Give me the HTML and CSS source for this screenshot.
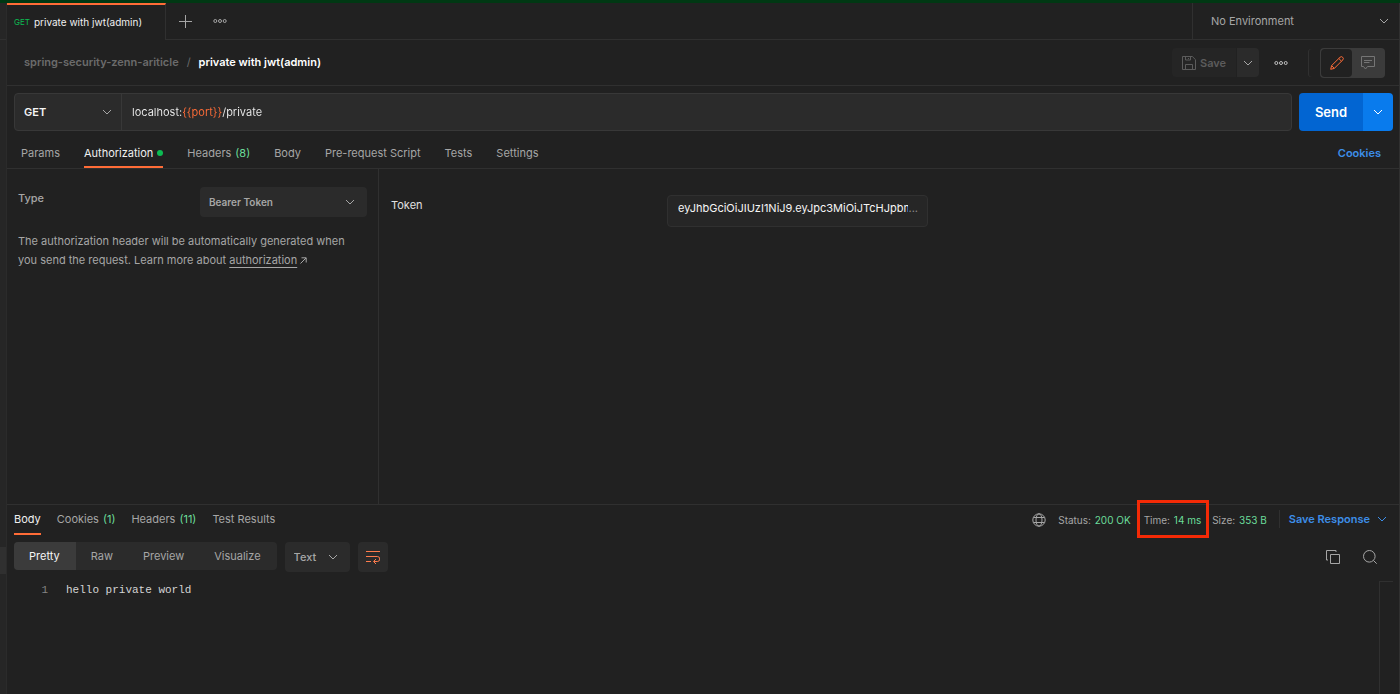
FILE: index.html
```html
<!DOCTYPE html>
<html lang="en">
<head>
<meta charset="utf-8">
<title>private with jwt(admin)</title>
<link rel="stylesheet" href="styles.css">
</head>
<body>
<svg class="sprite" aria-hidden="true">
  <symbol id="chevron" viewBox="0 0 10 10"><path d="M1 3l4 4 4-4" fill="none" stroke="currentColor"/></symbol>
  <symbol id="dots" viewBox="0 0 14 6"><g fill="none" stroke="currentColor"><circle cx="2.300" cy="3" r="1.500"/><circle cx="7" cy="3" r="1.500"/><circle cx="11.700" cy="3" r="1.500"/></g></symbol>
</svg>
<div class="app">
  <aside class="rail"><div class="rail-head"></div><div class="rail-item"></div></aside>
  <main class="main">
    <header class="tabbar">
      <button class="file-tab"><span class="verb">GET</span>private with jwt(admin)</button>
      <button class="icon-btn add-tab" aria-label="New tab"><svg width="13" height="13" viewBox="0 0 13 13"><path d="M6.500 0v13M0 6.500h13" stroke="currentColor" fill="none"/></svg></button>
      <button class="icon-btn more-tabs" aria-label="Tab options"><svg width="14" height="6"><use href="#dots"/></svg></button>
      <div class="select-box env">
        <select aria-label="Environment"><option>No Environment</option></select>
        <svg class="chev" width="10" height="10"><use href="#chevron"/></svg>
      </div>
    </header>

    <div class="titlebar">
      <nav class="crumbs"><a href="#">spring-security-zenn-ariticle</a><span>/</span><strong>private with jwt(admin)</strong></nav>
      <div class="save-group">
        <button class="save" disabled><svg width="14" height="14" viewBox="0 0 14 14"><g fill="none" stroke="currentColor"><path d="M.5.5h9.800l3.200 3.200v9.800H.5z"/><path d="M3.500.5v3.500h5V.5M3.500 13.500V8.500h7v5M6.500 2v1"/></g></svg>Save</button>
        <button class="save-more" aria-label="Save options"><svg width="10" height="10"><use href="#chevron"/></svg></button>
      </div>
      <button class="icon-btn more" aria-label="More actions"><svg width="14" height="6"><use href="#dots"/></svg></button>
      <div class="view-toggle">
        <button class="on" aria-label="Edit"><svg width="14" height="14" viewBox="0 0 14 14"><g fill="none" stroke="currentColor"><path d="M.7 13.300l.9-3.700 8.400-8.300a1.900 1.900 0 0 1 2.700 2.700L4.300 12.400z"/><path d="M8.800 2.500l2.700 2.700M1.600 9.600l2.700 2.800"/></g></svg></button>
        <button aria-label="Comments"><svg width="14" height="14" viewBox="0 0 14 14"><g fill="none" stroke="currentColor"><path d="M.5.5h13v10H6.500L4.500 13l-2-2.500h-2z"/><path d="M3 4.500h8M3 6.500h5.500"/></g></svg></button>
      </div>
    </div>

    <form class="request">
      <div class="url-box">
        <div class="select-box method">
          <select aria-label="Method"><option>GET</option></select>
          <svg class="chev" width="10" height="10"><use href="#chevron"/></svg>
        </div>
        <input class="url" type="text" aria-label="Request URL" value="localhost:{{port}}/private">
      </div>
      <div class="send-group">
        <button class="send" type="button">Send</button>
        <button class="send-more" type="button" aria-label="Send options"><svg width="10" height="10"><use href="#chevron"/></svg></button>
      </div>
    </form>

    <nav class="req-tabs">
      <button>Params</button>
      <button class="active">Authorization<i class="dot"></i></button>
      <button>Headers <span class="count">(8)</span></button>
      <button>Body</button>
      <button>Pre-request Script</button>
      <button>Tests</button>
      <button>Settings</button>
      <a class="cookies" href="#">Cookies</a>
    </nav>

    <section class="auth">
      <div class="auth-type">
        <div class="type-row">
          <label for="type">Type</label>
          <div class="select-box type-select">
            <select id="type"><option>Bearer Token</option></select>
            <svg class="chev" width="10" height="10"><use href="#chevron"/></svg>
          </div>
        </div>
        <p>The authorization header will be automatically generated when you send the request. Learn more about <a href="#">authorization</a> <svg width="7" height="7" viewBox="0 0 7 7"><path d="M.5 6.500l5.500-5.500M1.500.8h4.700v4.700" fill="none" stroke="currentColor"/></svg></p>
      </div>
      <div class="auth-form">
        <label for="token">Token</label>
        <div class="token-box"><input id="token" type="text" value="eyJhbGciOiJIUzI1NiJ9.eyJpc3MiOiJTcHJpbmc"><span>...</span></div>
      </div>
    </section>

    <section class="response">
      <div class="res-head">
        <nav class="res-tabs">
          <button class="active">Body</button>
          <button>Cookies <span class="count">(1)</span></button>
          <button>Headers <span class="count">(11)</span></button>
          <button>Test Results</button>
        </nav>
        <div class="meta">
          <svg class="globe" width="14" height="14" viewBox="0 0 14 14"><g fill="none" stroke="currentColor"><circle cx="7" cy="7" r="6.200"/><ellipse cx="7" cy="7" rx="3" ry="6.200"/><path d="M1.500 4.500h11M1.500 9.500h11"/></g></svg>
          <span>Status: <b>200 OK</b></span>
          <span class="time">Time: <b>14 ms</b></span>
          <span>Size: <b>353 B</b></span>
          <button class="save-res">Save Response<svg width="10" height="10"><use href="#chevron"/></svg></button>
        </div>
      </div>
      <div class="res-tools">
        <div class="views"><button class="on">Pretty</button><button>Raw</button><button>Preview</button><button>Visualize</button></div>
        <div class="select-box format">
          <select aria-label="Format"><option>Text</option></select>
          <svg class="chev" width="10" height="10"><use href="#chevron"/></svg>
        </div>
        <button class="wrap" aria-label="Wrap lines"><svg width="14" height="14" viewBox="0 0 14 14"><g fill="none" stroke="currentColor"><path d="M0 1.500h14M0 6.500h11.300a2.300 2.300 0 0 1 0 5H8M0 11.500h5"/><path d="M10 9L7.500 11.500 10 14"/></g></svg></button>
        <div class="tools-right">
          <button class="icon-btn" aria-label="Copy"><svg width="14" height="14" viewBox="0 0 14 14"><g fill="none" stroke="currentColor"><path d="M4.500 4.500h9v9h-9z"/><path d="M2 10H.5V.5H10V2"/></g></svg></button>
          <button class="icon-btn" aria-label="Search"><svg width="14" height="14" viewBox="0 0 14 14"><g fill="none" stroke="currentColor"><circle cx="6.300" cy="6.300" r="5.800"/><path d="M10.400 10.400l3.300 3.300"/></g></svg></button>
        </div>
      </div>
      <div class="code">
        <pre><span class="num">1</span>hello private world</pre>
        <div class="minimap"></div>
      </div>
    </section>
  </main>
</div>
</body>
</html>
```
FILE: styles.css
```css
* { box-sizing: border-box; }
body {
  margin: 0;
  background: #212121;
  color: #a6a6a6;
  font: 11px/18px Inter, "Liberation Sans", sans-serif;
}
button, select, input {
  margin: 0;
  padding: 0;
  border: 0;
  background: none;
  color: inherit;
  font: inherit;
}
svg { display: block; flex: none; }
a { color: inherit; text-decoration: none; }
.sprite { position: absolute; width: 0; height: 0; }

.app {
  display: flex;
  height: 100vh;
  border-top: 3px solid #003813;
}
.rail {
  width: 7px;
  flex: none;
  background: #262626;
  border-right: 1px solid #2b2b2b;
}
.rail-head { height: 37px; border-bottom: 1px solid #303030; }
.rail-item { height: 27px; margin-top: 507px; background: #303030; }
.main {
  flex: 1;
  min-width: 0;
  display: flex;
  flex-direction: column;
  border-right: 1px solid #303030;
}

.select-box { display: grid; align-items: center; }
.select-box select, .select-box .chev { grid-area: 1 / 1; }
.select-box select { appearance: none; width: 100%; height: 100%; outline: none; }
.select-box .chev { justify-self: end; pointer-events: none; }
.icon-btn { display: grid; place-items: center; }

.tabbar {
  display: flex;
  height: 37px;
  flex: none;
  border-bottom: 1px solid #303030;
}
.file-tab {
  display: flex;
  align-items: center;
  gap: 4px;
  width: 159px;
  height: 37px;
  padding: 0 0 2px 7px;
  background: #212121;
  border-top: 2px solid #ff6c37;
  border-right: 1px solid #303030;
  color: #f0f0f0;
  font-size: 10px;
  white-space: nowrap;
}
.verb { color: #0cbb52; font-size: 8px; }
.add-tab { width: 39px; }
.more-tabs { width: 29px; }
.env {
  width: 207px;
  margin-left: auto;
  padding-right: 10px;
  border-left: 1px solid #303030;
}
.env select { padding-left: 18px; }

.titlebar {
  display: flex;
  align-items: center;
  height: 46px;
  flex: none;
  padding: 0 14px 0 17px;
  border-bottom: 1px solid #303030;
}
.crumbs { display: flex; gap: 8px; margin-right: auto; padding-bottom: 2px; font-weight: 600; color: #6b6b6b; }
.crumbs span { font-weight: 400; }
.crumbs strong { color: #fff; font-weight: 600; }
.save-group { display: flex; gap: 1px; height: 29px; }
.save {
  display: flex;
  align-items: center;
  gap: 4px;
  width: 64px;
  padding-left: 10px;
  border-radius: 4px 0 0 4px;
  background: #252525;
  color: #5c5c5c;
  font-size: 11px;
  font-weight: 600;
}
.save-more {
  display: grid;
  place-items: center;
  width: 22px;
  border-radius: 0 4px 4px 0;
  background: #2b2b2b;
}
.more { width: 44px; color: #c0c0c0; }
.view-toggle {
  display: flex;
  height: 30px;
  margin-left: 17px;
  padding: 1px;
  border-radius: 4px;
  background: #3b3b3b;
  box-shadow: -12px 0 0 -1px #212121, -13px 0 0 -1px #303030;
}
.view-toggle button { display: grid; place-items: center; width: 32px; border-radius: 4px; color: #757575; }
.view-toggle .on { width: 31px; background: #212121; color: #ff6c37; }

.request { display: flex; gap: 7px; height: 38px; margin: 7px 6px 0 7px; flex: none; }
.url-box {
  display: flex;
  flex: 1;
  border: 1px solid #383838;
  border-radius: 4px;
  background: #2b2b2b;
}
.method { width: 107px; padding-right: 9px; border-right: 1px solid #383838; }
.method select { padding-left: 9px; color: #f5f5f5; font-size: 11px; font-weight: 600; }
.url {
  flex: 1;
  min-width: 0;
  padding-left: 10px;
  background: linear-gradient(to right, #f0f0f0 61px, #ff6c37 61px 100px, #f0f0f0 100px);
  -webkit-background-clip: text;
  background-clip: text;
  color: transparent;
  caret-color: #f0f0f0;
  outline: none;
}
.send-group { display: flex; border-radius: 4px; overflow: hidden; color: #fff; }
.send { width: 64px; background: #0265d2; font-size: 13px; font-weight: 600; }
.send-more { display: grid; place-items: center; width: 30px; background: #097bed; }

.req-tabs {
  display: flex;
  gap: 24px;
  height: 38px;
  flex: none;
  padding: 0 18px 0 14px;
  border-bottom: 1px solid #303030;
  white-space: nowrap;
}
.req-tabs button, .res-tabs button {
  display: flex;
  align-items: center;
  gap: 4px;
  border-bottom: 2px solid transparent;
}
.req-tabs button { padding-top: 8px; }
.req-tabs .active, .res-tabs .active { color: #f0f0f0; border-color: #ff6c37; }
.dot { width: 6px; height: 6px; border-radius: 50%; background: #0cbb52; }
.count { color: #6bdd9a; }
.cookies { margin: 13px 0 0 auto; color: #3d8ee8; font-weight: 600; }

.auth { display: flex; flex: 16 1 0; min-height: 0; }
.auth-type { width: 372px; flex: none; padding: 18px 11px; border-right: 1px solid #303030; }
.type-row { display: flex; justify-content: space-between; }
.type-row label { padding-top: 2px; font-weight: 500; }
.type-select { width: 167px; height: 30px; padding-right: 12px; border-radius: 4px; background: #2b2b2b; }
.type-select select { padding-left: 9px; font-size: 10px; font-weight: 600; }
.auth-type p { margin: 15px 14px 0 0; line-height: 19px; }
.auth-type p a { text-decoration: underline; text-underline-offset: 3px; }
.auth-type p svg { display: inline; }
.auth-form { display: flex; flex: 1; align-items: flex-start; padding: 26px 12px; color: #e0e0e0; }
.auth-form label { width: 276px; padding-top: 1px; }
.token-box {
  display: flex;
  width: 261px;
  height: 32px;
  padding: 3px 9px 0 10px;
  border: 1px solid #303030;
  border-radius: 4px;
  background: #262626;
}
.token-box input { flex: 1; min-width: 0; height: 18px; color: #f5f5f5; outline: none; }
.token-box span { color: #8a8a8a; }

.response {
  display: flex;
  flex-direction: column;
  flex: 9 1 0;
  min-height: 0;
  border-top: 1px solid #303030;
}
.res-head { display: flex; justify-content: space-between; height: 37px; flex: none; }
.res-tabs { display: flex; gap: 16px; height: 30px; padding-left: 7px; white-space: nowrap; }
.meta { display: flex; align-items: flex-start; gap: 12px; padding: 5px 12px 0 0; white-space: nowrap; font-size: 10px; }
.meta span { padding-top: 1px; }
.meta b { margin-left: 1px; color: #6bdd9a; font-weight: 400; }
.globe { margin: 3px 0 0; }
.meta .time { margin: -10px -9px 0 -6px; padding: 8px 5px 6px 4px; border: 3px solid #f42a06; }
.save-res {
  display: flex;
  align-items: center;
  gap: 7px;
  padding-left: 9px;
  border-left: 1px solid #303030;
  color: #3d8ee8;
  font-size: 11px;
  font-weight: 600;
}
.res-tools { display: flex; align-items: flex-start; gap: 8px; padding: 0 22px 0 7px; flex: none; }
.views { display: flex; height: 28px; padding-right: 1px; border-radius: 4px; overflow: hidden; background: #2b2b2b; }
.views button { padding: 0 15px; }
.views .on { padding-right: 16px; background: #3b3b3b; color: #f5f5f5; }
.format { width: 65px; height: 30px; padding-right: 12px; border-radius: 4px; background: #2b2b2b; }
.format select { padding-left: 9px; font-weight: 500; }
.wrap { display: grid; place-items: center; width: 30px; height: 30px; border-radius: 4px; background: #2b2b2b; color: #ff7c4d; }
.tools-right { display: flex; gap: 23px; height: 30px; margin-left: auto; }
.code { display: flex; justify-content: space-between; flex: 1; min-height: 0; padding: 9px 6px 0 0; }
.code pre { margin: 0; font: 11px/18px "Liberation Mono", monospace; color: #d4d4d4; }
.num { display: inline-block; width: 41px; margin-right: 18px; text-align: right; color: #858585; }
.minimap { width: 14px; border: solid #303030; border-width: 1px 0 0 1px; }
```
